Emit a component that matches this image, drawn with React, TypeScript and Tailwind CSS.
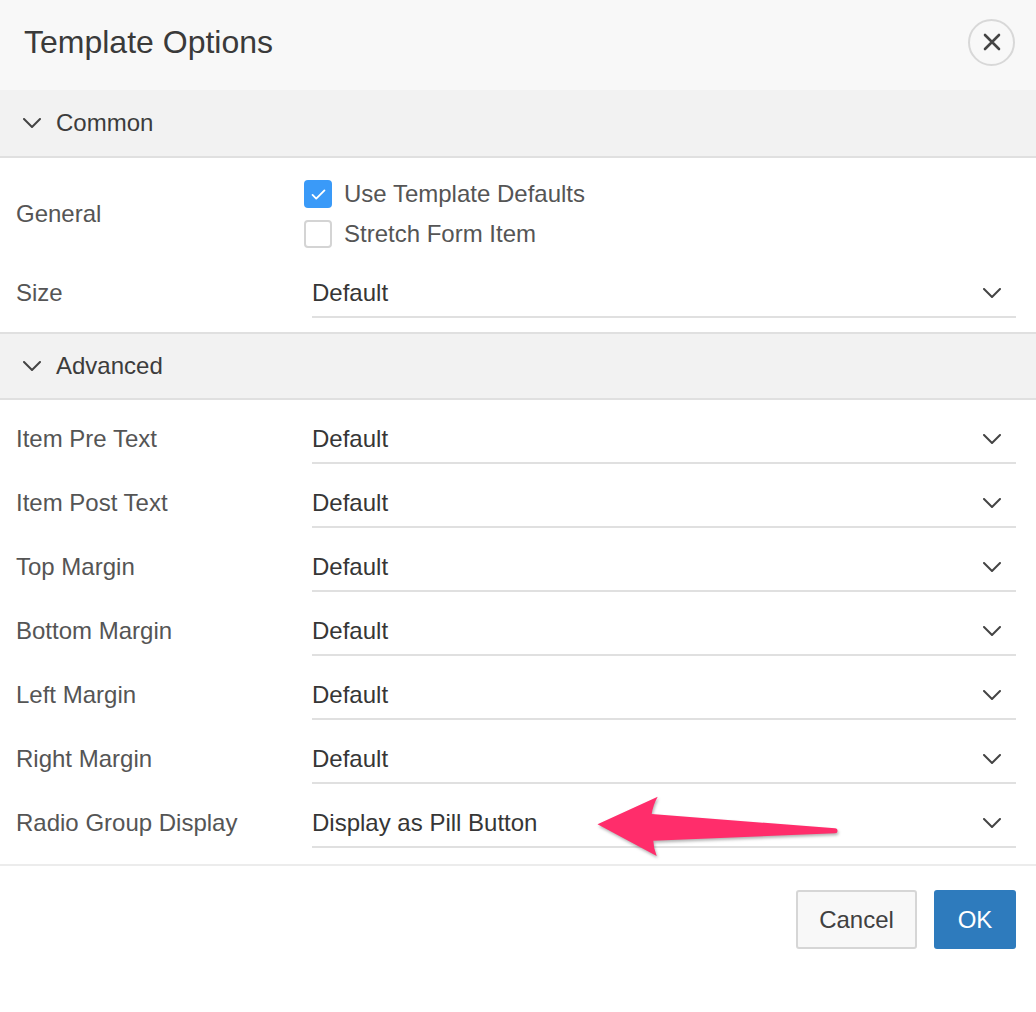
import React from 'react';

interface OptionRow {
  label: string;
  value: string;
}

const ADVANCED: OptionRow[] = [
  { label: 'Item Pre Text', value: 'Default' },
  { label: 'Item Post Text', value: 'Default' },
  { label: 'Top Margin', value: 'Default' },
  { label: 'Bottom Margin', value: 'Default' },
  { label: 'Left Margin', value: 'Default' },
  { label: 'Right Margin', value: 'Default' },
  { label: 'Radio Group Display', value: 'Display as Pill Button' },
];

function Chevron({ className }: { className?: string }) {
  return (
    <svg viewBox="0 0 18 10" className={className} fill="none">
      <path d="M1 1l8 8 8-8" stroke="#444" strokeWidth="2" strokeLinecap="round" strokeLinejoin="round" />
    </svg>
  );
}

function SelectField({ value }: { value: string }) {
  return (
    <div className="h-[48px] border-b-2 border-[#e0e0e0] flex items-center justify-between pr-[15px]">
      <span className="text-[24px] text-[#363636]">{value}</span>
      <Chevron className="w-[18px] h-[10px]" />
    </div>
  );
}

function Checkbox({ checked, label }: { checked: boolean; label: string }) {
  return (
    <div className="h-[40px] flex items-center gap-3">
      {checked ? (
        <span className="w-[28px] h-[28px] rounded-[4px] bg-[#3a9af8] flex items-center justify-center">
          <svg viewBox="0 0 16 12" className="w-[15px] h-[11px]" fill="none">
            <path d="M1.5 6.5l4 4 9-9" stroke="#fff" strokeWidth="2" strokeLinecap="round" strokeLinejoin="round" />
          </svg>
        </span>
      ) : (
        <span className="w-[28px] h-[28px] rounded-[4px] border-2 border-[#d4d4d4] bg-white" />
      )}
      <span className="text-[24px] text-[#555]">{label}</span>
    </div>
  );
}

function SectionHeader({ title, first }: { title: string; first?: boolean }) {
  return (
    <div
      className={`h-[68px] ${first ? '' : 'border-t-2'} border-b-2 border-[#e0e0e0] bg-[#f2f2f2] flex items-center pl-[23px] gap-[15px]`}
    >
      <Chevron className="w-[18px] h-[10px]" />
      <span className="text-[24px] text-[#3c3c3c]">{title}</span>
    </div>
  );
}

export default function App() {
  return (
    <div className="relative w-full min-h-[1012px] bg-white font-['Liberation_Sans',Arial,sans-serif]">
      {/* header */}
      <header className="h-[90px] bg-[#f8f8f8] flex items-center justify-between pl-6 pr-[21px] pb-[6px]">
        <h1 className="text-[32px] text-[#3a3a3a]">Template Options</h1>
        <button className="w-[47px] h-[47px] rounded-full border-2 border-[#d8d8d8] flex items-center justify-center">
          <svg viewBox="0 0 20 20" className="w-[20px] h-[20px]" fill="none">
            <path d="M3 3l14 14M17 3L3 17" stroke="#444" strokeWidth="2.6" strokeLinecap="round" />
          </svg>
        </button>
      </header>

      {/* common */}
      <SectionHeader title="Common" first />
      <div className="pl-4 pr-5 pt-4 pb-[14px] flex flex-col gap-4">
        <div className="grid grid-cols-[296px_1fr] items-center">
          <span className="text-[24px] text-[#555]">General</span>
          <div className="-ml-2 flex flex-col">
            <Checkbox checked label="Use Template Defaults" />
            <Checkbox checked={false} label="Stretch Form Item" />
          </div>
        </div>
        <div className="grid grid-cols-[296px_1fr] items-center">
          <span className="text-[24px] text-[#555] pb-[2px]">Size</span>
          <SelectField value="Default" />
        </div>
      </div>

      {/* advanced */}
      <SectionHeader title="Advanced" />
      <div className="pl-4 pr-5 py-4 flex flex-col gap-4">
        {ADVANCED.map((row) => (
          <div key={row.label} className="grid grid-cols-[296px_1fr] items-center">
            <span className="text-[24px] text-[#555] pb-[2px]">{row.label}</span>
            <SelectField value={row.value} />
          </div>
        ))}
      </div>

      {/* footer */}
      <footer className="border-t-2 border-[#ececec] pt-6 pr-5 flex justify-end gap-[17px]">
        <button className="w-[121px] h-[59px] rounded-[3px] border-2 border-[#d6d6d6] bg-[#f8f8f8] text-[24px] text-[#404040]">
          Cancel
        </button>
        <button className="w-[82px] h-[59px] rounded-[3px] bg-[#2e7bbd] text-[24px] text-white">OK</button>
      </footer>

      {/* annotation arrow */}
      <svg
        viewBox="0 0 260 75"
        className="absolute left-[590px] top-[790px] w-[260px] h-[75px] drop-shadow-[1px_2px_1.5px_rgba(0,0,0,0.3)]"
      >
        <path
          d="M7.5 34.3 L67.7 6.7 Q63 15 61.7 24 L245 38.3 A2.5 2.5 0 0 1 245 43.3 L63.3 50.7 Q63.5 58 66.7 66 Z"
          fill="#ff2d6b"
        />
      </svg>
    </div>
  );
}
